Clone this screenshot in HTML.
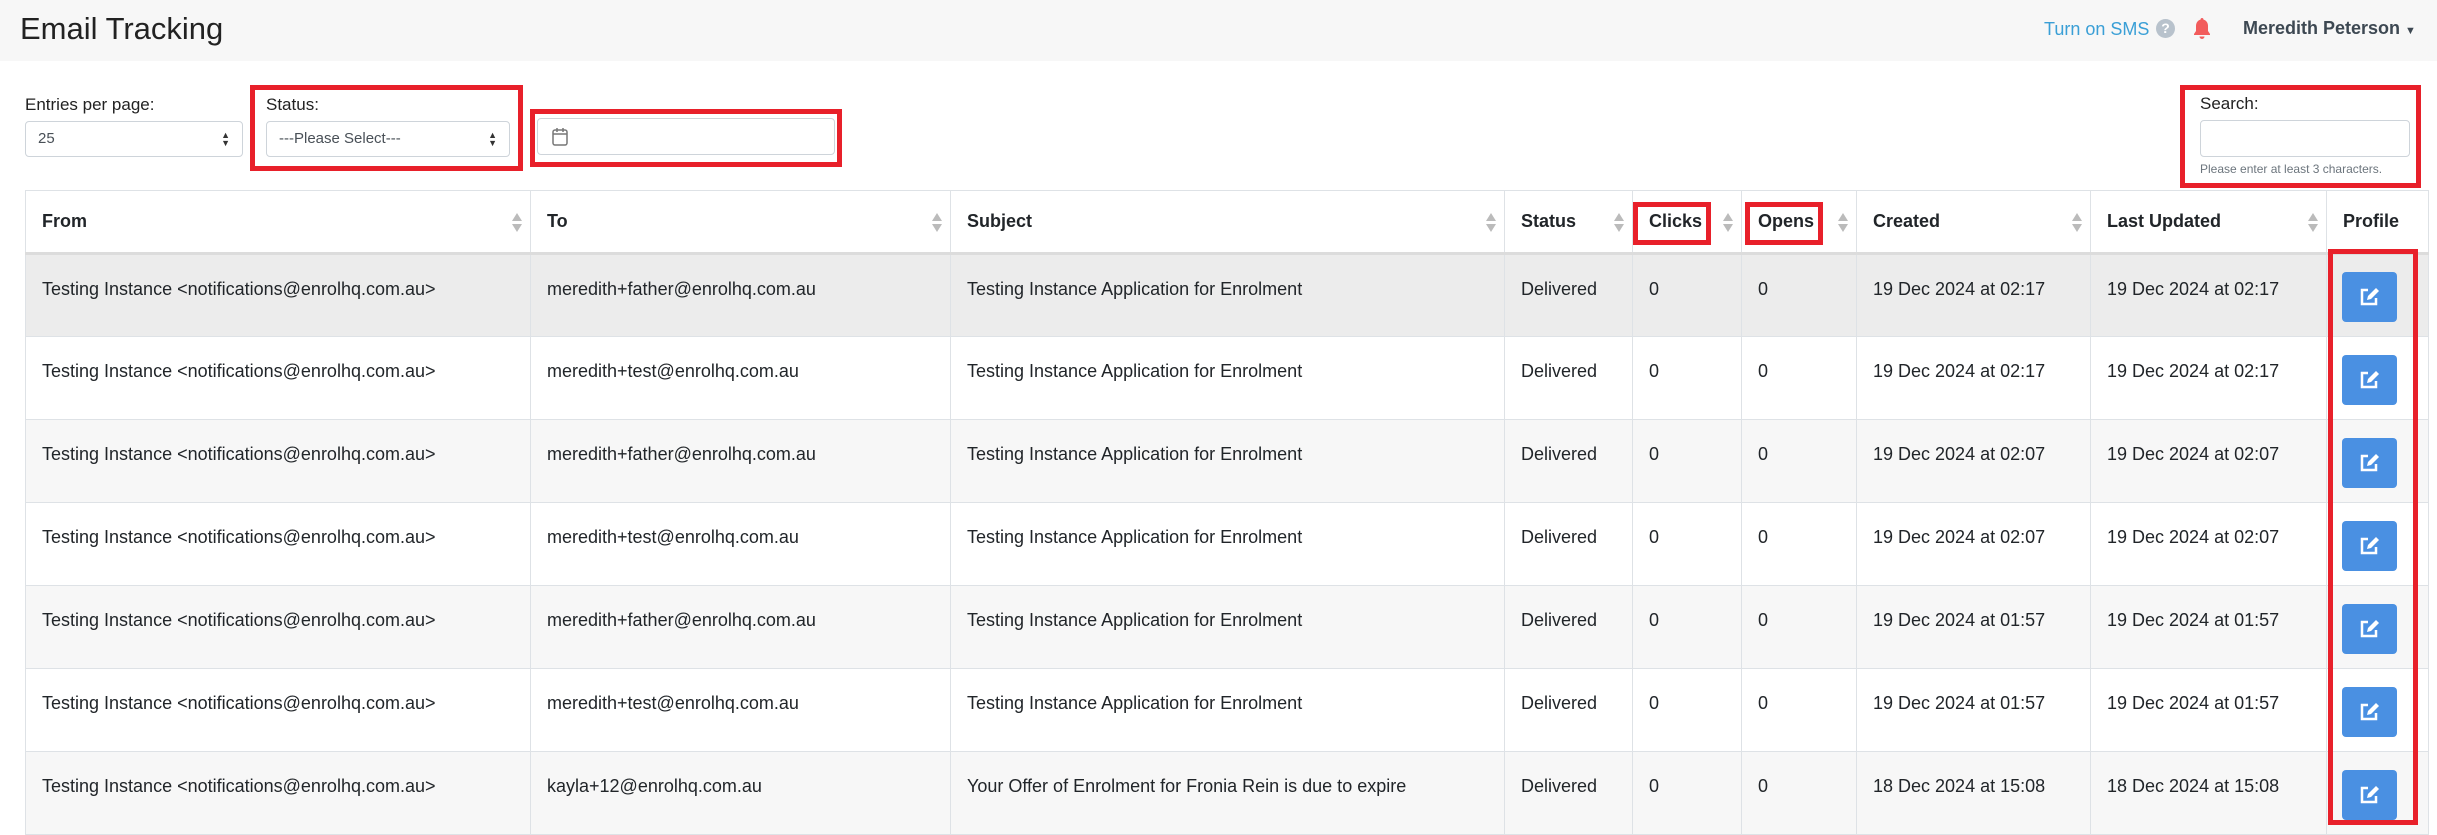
<!DOCTYPE html>
<html><head><meta charset="utf-8"><style>
*{box-sizing:border-box;margin:0;padding:0}
body{width:2437px;height:834px;overflow:hidden;background:#fff;font-family:"Liberation Sans",sans-serif;color:#212529;position:relative}
.hdr{position:absolute;left:0;top:0;width:2437px;height:61px;background:#f7f7f7}
.title{position:absolute;left:20px;top:11px;font-size:31px;color:#222}
.sms{position:absolute;left:2044px;top:19px;font-size:18px;color:#3a9fd6}
.q{position:absolute;left:2156px;top:19px;width:19px;height:19px;border-radius:50%;background:#b8c2cc;color:#fff;font-size:14px;font-weight:bold;text-align:center;line-height:19px}
.user{position:absolute;left:2243px;top:18px;font-size:18px;font-weight:bold;color:#3d4852}
.lbl{position:absolute;font-size:17px;color:#222}
.sel{position:absolute;border:1px solid #ced4da;border-radius:4px;background:#fff;font-size:15px;color:#495057;padding-left:12px;line-height:34px}
.arr{position:absolute;right:12px;top:9px;font-size:9px;line-height:8px;color:#333}
.red{position:absolute;border:5px solid #e8202a}
table{position:absolute;left:25px;top:190px;border-collapse:collapse;font-size:18px}
td,th{border:1px solid #dee2e6;text-align:left;vertical-align:top}
th{height:63px;font-weight:bold;padding:20px 16px 0;position:relative;border-bottom:3px solid #dcdcdc}
td{height:83px;padding:24px 16px 0}
.s{position:absolute;right:8px;top:22px;width:10px;height:20px}
.s:before{content:"";position:absolute;left:0;top:0;border-left:5px solid transparent;border-right:5px solid transparent;border-bottom:8px solid #bbb}
.s:after{content:"";position:absolute;left:0;top:11px;border-left:5px solid transparent;border-right:5px solid transparent;border-top:8px solid #bbb}
tr.g td{background:#f7f7f7}
tr.h td{background:#ececec}
.btn{position:absolute;left:2342px;width:55px;height:50px;background:#4a90e2;border-radius:4px}
.btn svg{position:absolute;left:17px;top:15px}
</style></head><body>
<div class="hdr"></div>
<div class="title">Email Tracking</div>
<div class="sms">Turn on SMS</div>
<div class="q">?</div>
<svg style="position:absolute;left:2193px;top:17px" width="18" height="24" viewBox="0 0 18 24"><path d="M9 1c-1 0-1.5.8-1.5 1.6C4.5 3.4 3 6 3 9v5l-2 3v1h16v-1l-2-3V9c0-3-1.5-5.6-4.5-6.4C10.5 1.8 10 1 9 1z M6.5 19.5a2.5 2.5 0 0 0 5 0z" fill="#f25c5c"/></svg>
<div class="user">Meredith Peterson <span style="font-size:11px">▼</span></div>

<div class="lbl" style="left:25px;top:95px">Entries per page:</div>
<div class="sel" style="left:25px;top:121px;width:218px;height:36px">25<div class="arr">▲<br>▼</div></div>
<div class="lbl" style="left:266px;top:95px">Status:</div>
<div class="sel" style="left:266px;top:121px;width:244px;height:36px">---Please Select---<div class="arr">▲<br>▼</div></div>
<div class="red" style="left:250px;top:85px;width:273px;height:86px"></div>
<div class="sel" style="left:537px;top:118px;width:298px;height:37px"></div>
<svg style="position:absolute;left:552px;top:127px" width="16" height="19" viewBox="0 0 16 19"><rect x="1" y="3" width="14" height="15" rx="2" fill="none" stroke="#777" stroke-width="1.5"/><path d="M1 7h14M5 1v4M11 1v4" stroke="#777" stroke-width="1.5"/></svg>
<div class="red" style="left:530px;top:109px;width:312px;height:58px"></div>

<div class="lbl" style="left:2200px;top:94px">Search:</div>
<div class="sel" style="left:2200px;top:120px;width:210px;height:37px"></div>
<div class="lbl" style="left:2200px;top:162px;font-size:12px;color:#6c757d">Please enter at least 3 characters.</div>
<div class="red" style="left:2180px;top:85px;width:241px;height:103px"></div>

<table>
<tr><th style="width:505px">From<span class="s"></span></th><th style="width:420px">To<span class="s"></span></th><th style="width:554px">Subject<span class="s"></span></th><th style="width:128px">Status<span class="s"></span></th><th style="width:109px">Clicks<span class="s"></span></th><th style="width:115px">Opens<span class="s"></span></th><th style="width:234px">Created<span class="s"></span></th><th style="width:236px">Last Updated<span class="s"></span></th><th style="width:102px">Profile</th></tr>
<tr class="h"><td>Testing Instance &lt;notifications@enrolhq.com.au&gt;</td><td>meredith+father@enrolhq.com.au</td><td>Testing Instance Application for Enrolment</td><td>Delivered</td><td>0</td><td>0</td><td>19 Dec 2024 at 02:17</td><td>19 Dec 2024 at 02:17</td><td></td></tr>
<tr><td>Testing Instance &lt;notifications@enrolhq.com.au&gt;</td><td>meredith+test@enrolhq.com.au</td><td>Testing Instance Application for Enrolment</td><td>Delivered</td><td>0</td><td>0</td><td>19 Dec 2024 at 02:17</td><td>19 Dec 2024 at 02:17</td><td></td></tr>
<tr class="g"><td>Testing Instance &lt;notifications@enrolhq.com.au&gt;</td><td>meredith+father@enrolhq.com.au</td><td>Testing Instance Application for Enrolment</td><td>Delivered</td><td>0</td><td>0</td><td>19 Dec 2024 at 02:07</td><td>19 Dec 2024 at 02:07</td><td></td></tr>
<tr><td>Testing Instance &lt;notifications@enrolhq.com.au&gt;</td><td>meredith+test@enrolhq.com.au</td><td>Testing Instance Application for Enrolment</td><td>Delivered</td><td>0</td><td>0</td><td>19 Dec 2024 at 02:07</td><td>19 Dec 2024 at 02:07</td><td></td></tr>
<tr class="g"><td>Testing Instance &lt;notifications@enrolhq.com.au&gt;</td><td>meredith+father@enrolhq.com.au</td><td>Testing Instance Application for Enrolment</td><td>Delivered</td><td>0</td><td>0</td><td>19 Dec 2024 at 01:57</td><td>19 Dec 2024 at 01:57</td><td></td></tr>
<tr><td>Testing Instance &lt;notifications@enrolhq.com.au&gt;</td><td>meredith+test@enrolhq.com.au</td><td>Testing Instance Application for Enrolment</td><td>Delivered</td><td>0</td><td>0</td><td>19 Dec 2024 at 01:57</td><td>19 Dec 2024 at 01:57</td><td></td></tr>
<tr class="g"><td>Testing Instance &lt;notifications@enrolhq.com.au&gt;</td><td>kayla+12@enrolhq.com.au</td><td>Your Offer of Enrolment for Fronia Rein is due to expire</td><td>Delivered</td><td>0</td><td>0</td><td>18 Dec 2024 at 15:08</td><td>18 Dec 2024 at 15:08</td><td></td></tr>
</table>

<div class="red" style="left:1633px;top:202px;width:78px;height:43px"></div>
<div class="red" style="left:1745px;top:202px;width:78px;height:43px"></div>
<div class="red" style="left:2328px;top:249px;width:90px;height:576px"></div>

<div class="btn" style="top:272px"><svg width="21" height="20" viewBox="0 0 21 20"><path d="M9 3H3v14h14v-6" fill="none" stroke="#fff" stroke-width="2.5"/><path d="M8 13l1-4 8-8 3 3-8 8z" fill="#fff"/></svg></div>
<div class="btn" style="top:355px"><svg width="21" height="20" viewBox="0 0 21 20"><path d="M9 3H3v14h14v-6" fill="none" stroke="#fff" stroke-width="2.5"/><path d="M8 13l1-4 8-8 3 3-8 8z" fill="#fff"/></svg></div>
<div class="btn" style="top:438px"><svg width="21" height="20" viewBox="0 0 21 20"><path d="M9 3H3v14h14v-6" fill="none" stroke="#fff" stroke-width="2.5"/><path d="M8 13l1-4 8-8 3 3-8 8z" fill="#fff"/></svg></div>
<div class="btn" style="top:521px"><svg width="21" height="20" viewBox="0 0 21 20"><path d="M9 3H3v14h14v-6" fill="none" stroke="#fff" stroke-width="2.5"/><path d="M8 13l1-4 8-8 3 3-8 8z" fill="#fff"/></svg></div>
<div class="btn" style="top:604px"><svg width="21" height="20" viewBox="0 0 21 20"><path d="M9 3H3v14h14v-6" fill="none" stroke="#fff" stroke-width="2.5"/><path d="M8 13l1-4 8-8 3 3-8 8z" fill="#fff"/></svg></div>
<div class="btn" style="top:687px"><svg width="21" height="20" viewBox="0 0 21 20"><path d="M9 3H3v14h14v-6" fill="none" stroke="#fff" stroke-width="2.5"/><path d="M8 13l1-4 8-8 3 3-8 8z" fill="#fff"/></svg></div>
<div class="btn" style="top:770px"><svg width="21" height="20" viewBox="0 0 21 20"><path d="M9 3H3v14h14v-6" fill="none" stroke="#fff" stroke-width="2.5"/><path d="M8 13l1-4 8-8 3 3-8 8z" fill="#fff"/></svg></div>
</body></html>
